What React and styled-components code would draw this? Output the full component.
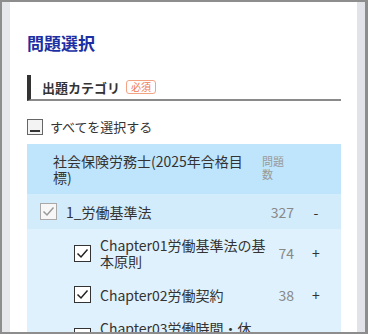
import React from "react";
import styled, { createGlobalStyle } from "styled-components";

const GlobalStyle = createGlobalStyle`
  html, body {
    margin: 0;
    padding: 0;
    background: #fff;
  }
  body {
    font-family: "Noto Sans CJK JP", "Noto Sans", sans-serif;
    color: #333;
  }
`;

const chapters = [
  { id: 1, label: "Chapter01労働基準法の基本原則", count: 74 },
  { id: 2, label: "Chapter02労働契約", count: 38 },
  { id: 3, label: "Chapter03労働時間・休憩・休日", count: 45 },
];

const Check = ({ $tone }) => (
  <CheckBox $tone={$tone}>
    <svg width="13" height="13" viewBox="0 0 13 13">
      <polyline
        points="1.5,6.5 5,10 11.5,2.5"
        fill="none"
        stroke={$tone === "muted" ? "#9a9a9a" : "#222"}
        strokeWidth="1.5"
      />
    </svg>
  </CheckBox>
);

const App = () => {
  return (
    <Frame>
      <GlobalStyle />
      <Gutter />
      <Main>
        <Title>問題選択</Title>
        <SectionHeader>
          <span>出題カテゴリ</span>
          <Badge>必須</Badge>
        </SectionHeader>
        <SelectAll>
          <EmptyBox />
          <span>すべてを選択する</span>
        </SelectAll>
        <Table>
          <HeadRow>
            <HeadName>社会保険労務士(2025年合格目標)</HeadName>
            <HeadCount>問題数</HeadCount>
            <span />
          </HeadRow>
          <Row $level={1}>
            <Name>
              <Check $tone="muted" />
              <span>1_労働基準法</span>
            </Name>
            <Count>327</Count>
            <Toggle>-</Toggle>
          </Row>
          {chapters.map((c) => (
            <Row key={c.id} $level={2}>
              <Name>
                <Check />
                <span>{c.label}</span>
              </Name>
              <Count>{c.count}</Count>
              <Toggle>+</Toggle>
            </Row>
          ))}
        </Table>
      </Main>
      <Gutter $right />
    </Frame>
  );
};

const Frame = styled.div`
  box-sizing: border-box;
  width: 368px;
  height: 334px;
  border: 2px solid #8d8d8d;
  border-right-width: 3px;
  display: flex;
  overflow: hidden;
`;

const Gutter = styled.div`
  flex: 0 0 8px;
  background: ${(p) => (p.$right ? "#e1e3e8" : "#e6e7eb")};
`;

const Main = styled.div`
  flex: 1;
  min-width: 0;
  background: #fff;
  padding: 29px 16px 0 17px;
`;

const Title = styled.h1`
  margin: 0;
  font-size: 17px;
  line-height: 24px;
  font-weight: 700;
  color: #1c2fa3;
`;

const SectionHeader = styled.div`
  box-sizing: border-box;
  margin-top: 20px;
  height: 26px;
  display: flex;
  align-items: center;
  padding-left: 11px;
  border-left: 4px solid #333;
  border-bottom: 2px solid #8a8a8a;
  font-size: 13px;
  font-weight: 700;
  color: #333;
`;

const Badge = styled.span`
  margin-left: 6px;
  padding: 0 4px;
  border: 1px solid #f2a384;
  border-radius: 3px;
  font-size: 10px;
  line-height: 12px;
  font-weight: 400;
  color: #ee7a50;
`;

const SelectAll = styled.label`
  margin-top: 18px;
  display: flex;
  align-items: center;
  gap: 7px;
  font-size: 13px;
  line-height: 16px;
  color: #333;
`;

const EmptyBox = styled.span`
  box-sizing: border-box;
  position: relative;
  flex: 0 0 16px;
  width: 16px;
  height: 16px;
  border: 1px solid #666;
  background: #f3f3f3;
  &::after {
    content: "";
    position: absolute;
    left: 2px;
    right: 2px;
    bottom: 2px;
    height: 2px;
    background: #333;
  }
`;

const Table = styled.div`
  margin-top: 9px;
`;

const RowBase = styled.div`
  display: grid;
  grid-template-columns: 1fr 28px 44px;
  padding-right: 3px;
  align-items: center;
  font-size: 14px;
  line-height: 16px;
`;

const HeadRow = styled(RowBase)`
  background: #bfe5fc;
  padding-top: 9px;
  padding-bottom: 9px;
  padding-left: 26px;
  align-items: start;
`;

const HeadName = styled.div`
  padding-right: 18px;
  color: #333;
`;

const HeadCount = styled.div`
  margin-left: -4px;
  font-size: 11px;
  line-height: 13px;
  color: #999;
  padding-top: 2px;
`;

const Row = styled(RowBase)`
  min-height: 35px;
  box-sizing: border-box;
  padding-top: 8px;
  padding-bottom: 8px;
  padding-left: ${(p) => (p.$level === 1 ? 13 : 47)}px;
  background: ${(p) => (p.$level === 1 ? "#d2ecfb" : "#dff1fc")};
`;

const Name = styled.div`
  display: flex;
  align-items: center;
  gap: 9px;
  color: #333;
`;

const CheckBox = styled.span`
  box-sizing: border-box;
  flex: 0 0 17px;
  width: 17px;
  height: 17px;
  display: flex;
  align-items: center;
  justify-content: center;
  background: ${(p) => (p.$tone === "muted" ? "#f7f7f7" : "#fff")};
  border: ${(p) => (p.$tone === "muted" ? "1px solid #a9a9a9" : "1.5px solid #333")};
`;

const Count = styled.div`
  text-align: right;
  color: #888;
`;

const Toggle = styled.div`
  text-align: center;
  color: #333;
`;

export default App;
